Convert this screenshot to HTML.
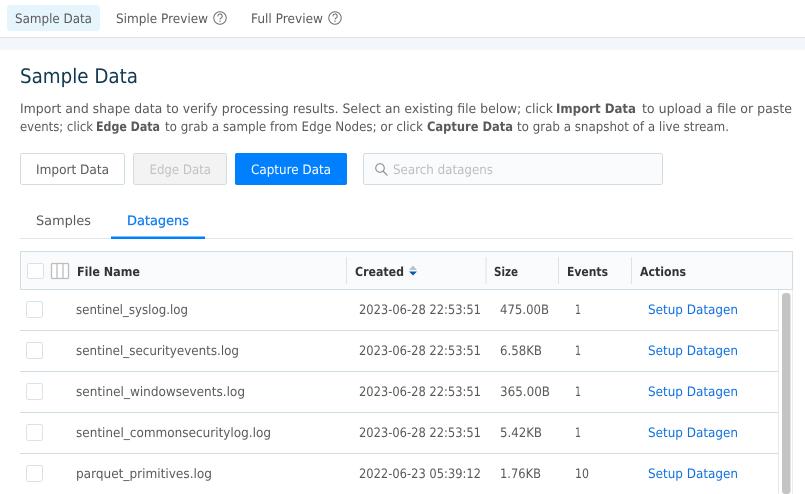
<!DOCTYPE html>
<html lang="en">
<head>
<meta charset="utf-8">
<title>Sample Data</title>
<style>
html,body{margin:0;padding:0;background:#fff;width:805px;height:494px;overflow:hidden}
svg{display:block}
text{font-family:"DejaVu Sans","Liberation Sans",sans-serif;font-size:13px;fill:#595959;text-rendering:geometricPrecision}
.b{font-weight:bold}
.h{font-weight:bold;fill:#333;font-size:12.5px}
.l{fill:#0f70e0}
</style>
</head>
<body>
<svg width="805" height="494" viewBox="0 0 805 494" xmlns="http://www.w3.org/2000/svg">
<defs>
<g id="q"><circle cx="0" cy="0" r="6.2" fill="none" stroke="#6f6f6f" stroke-width="1"/><path d="M-2-1.6A2.1 2.1 0 1 1 1.1-.1C.3.4 0 .8 0 1.5" fill="none" stroke="#6f6f6f" stroke-width="1"/><circle cx="0" cy="3.2" r=".65" fill="#6f6f6f"/></g>
<rect id="cb" width="16" height="16" rx="2" fill="#fff" stroke="#d8e2e8"/>
</defs>
<rect x="0" y="38" width="805" height="12" fill="#f3f7fb"/>
<rect x="0" y="37" width="805" height="1" fill="#dde3e8"/>
<rect x="7" y="5" width="93" height="26" rx="3" fill="#e6f4fb"/>
<text x="15" y="23" textLength="77" lengthAdjust="spacingAndGlyphs">Sample Data</text>
<text x="116" y="23" textLength="92" lengthAdjust="spacingAndGlyphs">Simple Preview</text>
<use href="#q" x="220" y="18"/>
<text x="251" y="23" textLength="72" lengthAdjust="spacingAndGlyphs">Full Preview</text>
<use href="#q" x="335" y="18"/>

<text x="20" y="83" textLength="118" lengthAdjust="spacingAndGlyphs" style="font-size:20px;fill:#12384f">Sample Data</text>

<text x="20" y="113" textLength="533" lengthAdjust="spacingAndGlyphs">Import and shape data to verify processing results. Select an existing file below; click</text>
<text x="556" y="113" textLength="80" lengthAdjust="spacingAndGlyphs" class="b">Import Data</text>
<text x="642" y="113" textLength="150" lengthAdjust="spacingAndGlyphs">to upload a file or paste</text>
<text x="20" y="131" textLength="73" lengthAdjust="spacingAndGlyphs">events; click</text>
<text x="96" y="131" textLength="64" lengthAdjust="spacingAndGlyphs" class="b">Edge Data</text>
<text x="165" y="131" textLength="258" lengthAdjust="spacingAndGlyphs">to grab a sample from Edge Nodes; or click</text>
<text x="427" y="131" textLength="86" lengthAdjust="spacingAndGlyphs" class="b">Capture Data</text>
<text x="517" y="131" textLength="212" lengthAdjust="spacingAndGlyphs">to grab a snapshot of a live stream.</text>

<rect x="20.500" y="153.500" width="104" height="31" rx="2" fill="#fff" stroke="#cfdde3"/>
<text x="36" y="174" textLength="73" lengthAdjust="spacingAndGlyphs">Import Data</text>
<rect x="133.500" y="153.500" width="93" height="31" rx="2" fill="#f3f3f3" stroke="#cfdde3"/>
<text x="149.500" y="174" textLength="61.500" lengthAdjust="spacingAndGlyphs" style="fill:#c2c2c2">Edge Data</text>
<rect x="235" y="153" width="112" height="32" rx="2" fill="#0080ff"/>
<text x="251" y="174" textLength="80" lengthAdjust="spacingAndGlyphs" style="fill:#fff">Capture Data</text>
<rect x="363.500" y="153.500" width="299" height="31" rx="2" fill="#fafbfd" stroke="#cfdde3"/>
<circle cx="380" cy="168" r="4.300" fill="none" stroke="#8c8c8c" stroke-width="1.100"/>
<path d="M383.200 171.200L387.500 175.500" stroke="#8c8c8c" stroke-width="1.200" fill="none"/>
<text x="393" y="174" textLength="100" lengthAdjust="spacingAndGlyphs" style="fill:#bdbdbd">Search datagens</text>

<text x="36" y="225" textLength="55" lengthAdjust="spacingAndGlyphs">Samples</text>
<text x="127" y="225" textLength="62" lengthAdjust="spacingAndGlyphs" style="fill:#0f7cf0;stroke:#0f7cf0;stroke-width:.25">Datagens</text>
<rect x="20" y="238" width="773" height="1" fill="#e2e6e9"/>
<rect x="111" y="236.500" width="94" height="2.500" fill="#0080ff"/>

<rect x="20.500" y="251.500" width="772" height="38" fill="#fafbfc" stroke="#cfdde5"/>
<rect x="27.500" y="263.500" width="16" height="15" rx="2" fill="#fff" stroke="#d8e2e8"/>
<path d="M52 263.500H67.500Q68.500 263.500 68.500 264.500V277.500Q68.500 278.500 67.500 278.500H52.500Q51.500 278.500 51.500 277.500V264.500Q51.500 263.500 52.500 263.500ZM57 264V278M63 264V278" fill="#fff" stroke="#bdbdbd" stroke-width="1.300"/>
<text x="77" y="276" textLength="63" lengthAdjust="spacingAndGlyphs" class="h">File Name</text>
<rect x="346" y="257" width="1" height="27" fill="#dfe3e6"/>
<text x="355" y="276" textLength="49" lengthAdjust="spacingAndGlyphs" class="h">Created</text>
<path d="M413 265.500L417 270H409Z" fill="#b9c2cb"/>
<path d="M409 271.500H417L413 275.500Z" fill="#0c54b8"/>
<rect x="485.500" y="257" width="1" height="27" fill="#dfe3e6"/>
<text x="494" y="276" textLength="24" lengthAdjust="spacingAndGlyphs" class="h">Size</text>
<rect x="558" y="257" width="1" height="27" fill="#dfe3e6"/>
<text x="567" y="276" textLength="41" lengthAdjust="spacingAndGlyphs" class="h">Events</text>
<rect x="631" y="257" width="1" height="27" fill="#dfe3e6"/>
<text x="640" y="276" textLength="46" lengthAdjust="spacingAndGlyphs" class="h">Actions</text>

<rect x="20" y="330" width="758" height="1" fill="#cfdde5"/>
<rect x="20" y="371" width="758" height="1" fill="#cfdde5"/>
<rect x="20" y="412" width="758" height="1" fill="#cfdde5"/>
<rect x="20" y="453" width="758" height="1" fill="#cfdde5"/>
<rect x="778" y="290" width="1" height="204" fill="#e8e8e8"/>
<rect x="792" y="290" width="1" height="204" fill="#ededed"/>
<rect x="782" y="293" width="8.500" height="201" rx="3" fill="#c4c4c4"/>

<use href="#cb" x="26.500" y="301.500"/>
<text x="76" y="314" textLength="112" lengthAdjust="spacingAndGlyphs">sentinel_syslog.log</text>
<text x="359" y="314" textLength="122" lengthAdjust="spacingAndGlyphs">2023-06-28 22:53:51</text>
<text x="500" y="314" textLength="49" lengthAdjust="spacingAndGlyphs">475.00B</text>
<text x="575" y="314" textLength="6" lengthAdjust="spacingAndGlyphs">1</text>
<text x="648" y="314" textLength="90" lengthAdjust="spacingAndGlyphs" class="l">Setup Datagen</text>

<use href="#cb" x="26.500" y="342.500"/>
<text x="76" y="355" textLength="163" lengthAdjust="spacingAndGlyphs">sentinel_securityevents.log</text>
<text x="359" y="355" textLength="122" lengthAdjust="spacingAndGlyphs">2023-06-28 22:53:51</text>
<text x="500" y="355" textLength="42" lengthAdjust="spacingAndGlyphs">6.58KB</text>
<text x="575" y="355" textLength="6" lengthAdjust="spacingAndGlyphs">1</text>
<text x="648" y="355" textLength="90" lengthAdjust="spacingAndGlyphs" class="l">Setup Datagen</text>

<use href="#cb" x="26.500" y="383.500"/>
<text x="76" y="396" textLength="169" lengthAdjust="spacingAndGlyphs">sentinel_windowsevents.log</text>
<text x="359" y="396" textLength="122" lengthAdjust="spacingAndGlyphs">2023-06-28 22:53:51</text>
<text x="500" y="396" textLength="50" lengthAdjust="spacingAndGlyphs">365.00B</text>
<text x="575" y="396" textLength="6" lengthAdjust="spacingAndGlyphs">1</text>
<text x="648" y="396" textLength="90" lengthAdjust="spacingAndGlyphs" class="l">Setup Datagen</text>

<use href="#cb" x="26.500" y="424.500"/>
<text x="76" y="437" textLength="195" lengthAdjust="spacingAndGlyphs">sentinel_commonsecuritylog.log</text>
<text x="359" y="437" textLength="122" lengthAdjust="spacingAndGlyphs">2023-06-28 22:53:51</text>
<text x="500" y="437" textLength="42" lengthAdjust="spacingAndGlyphs">5.42KB</text>
<text x="575" y="437" textLength="6" lengthAdjust="spacingAndGlyphs">1</text>
<text x="648" y="437" textLength="90" lengthAdjust="spacingAndGlyphs" class="l">Setup Datagen</text>

<use href="#cb" x="26.500" y="465.500"/>
<text x="76" y="478" textLength="136" lengthAdjust="spacingAndGlyphs">parquet_primitives.log</text>
<text x="359" y="478" textLength="122" lengthAdjust="spacingAndGlyphs">2022-06-23 05:39:12</text>
<text x="500" y="478" textLength="41" lengthAdjust="spacingAndGlyphs">1.76KB</text>
<text x="575" y="478" textLength="14" lengthAdjust="spacingAndGlyphs">10</text>
<text x="648" y="478" textLength="90" lengthAdjust="spacingAndGlyphs" class="l">Setup Datagen</text>
</svg>
</body>
</html>
